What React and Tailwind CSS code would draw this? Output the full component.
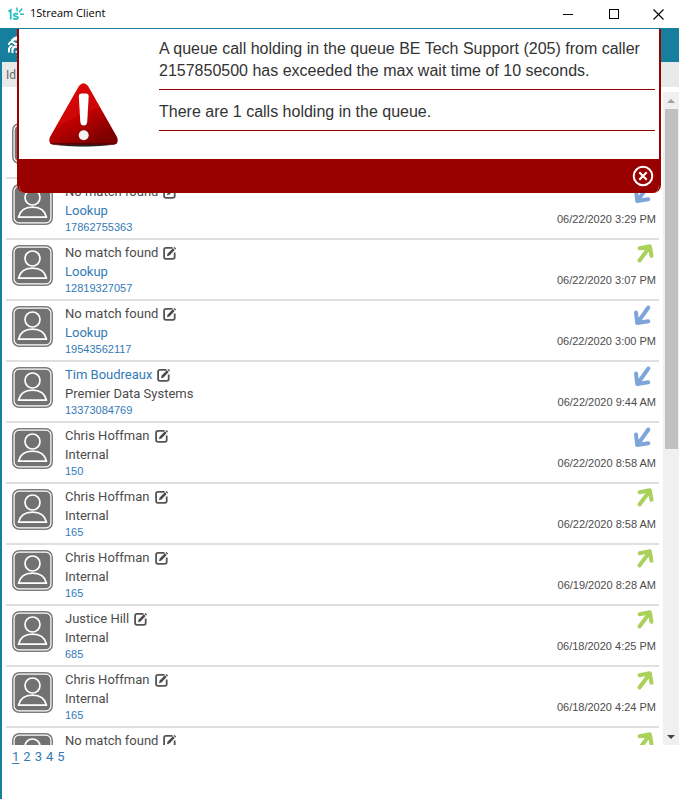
import { useState } from 'react'

const calls = [
  { name: 'No match found', direction: 'out' },
  { name: 'No match found', company: 'Lookup', lookup: true, number: '17862755363', direction: 'in', time: '06/22/2020 3:29 PM' },
  { name: 'No match found', company: 'Lookup', lookup: true, number: '12819327057', direction: 'out', time: '06/22/2020 3:07 PM' },
  { name: 'No match found', company: 'Lookup', lookup: true, number: '19543562117', direction: 'in', time: '06/22/2020 3:00 PM' },
  { name: 'Tim Boudreaux', linked: true, company: 'Premier Data Systems', number: '13373084769', direction: 'in', time: '06/22/2020 9:44 AM' },
  { name: 'Chris Hoffman', company: 'Internal', number: '150', direction: 'in', time: '06/22/2020 8:58 AM' },
  { name: 'Chris Hoffman', company: 'Internal', number: '165', direction: 'out', time: '06/22/2020 8:58 AM' },
  { name: 'Chris Hoffman', company: 'Internal', number: '165', direction: 'out', time: '06/19/2020 8:28 AM' },
  { name: 'Justice Hill', company: 'Internal', number: '685', direction: 'out', time: '06/18/2020 4:25 PM' },
  { name: 'Chris Hoffman', company: 'Internal', number: '165', direction: 'out', time: '06/18/2020 4:24 PM' },
  { name: 'No match found', direction: 'out' },
]

function Avatar() {
  return (
    <svg className="mt-[5px] shrink-0" width="41" height="41" viewBox="0 0 41 41" fill="none">
      <rect x="0.75" y="0.75" width="39.5" height="39.5" rx="6.5" fill="#fff" stroke="#7c7c7c" strokeWidth="1.5" />
      <rect x="2.7" y="2.7" width="35.6" height="35.6" rx="4.5" fill="#727272" />
      <circle cx="20.5" cy="13.5" r="7.5" stroke="#fff" strokeWidth="1.7" />
      <path d="M6.5 33.2C8 27 13 23.2 20.5 23.2S33 27 34.5 33.2Z" stroke="#fff" strokeWidth="1.7" strokeLinejoin="round" />
    </svg>
  )
}

function EditIcon() {
  return (
    <svg width="14" height="14" viewBox="0 0 14 14" fill="none">
      <path d="M9.5 1.9H3Q1.1 1.9 1.1 3.7V11Q1.1 12.8 3 12.8H9.8Q11.7 12.8 11.7 11V6.5" stroke="#555" strokeWidth="1.8" />
      <path d="M3.9 10.2L4.7 7.6L9.9 2.3L11.7 4.1L6.5 9.4Z" fill="#4a4a4a" />
      <path d="M10.5 1.7L11.4 0.9L13.1 2.6L12.3 3.5Z" fill="#4a4a4a" />
    </svg>
  )
}

function DirectionArrow({ direction }) {
  return (
    <svg width="24" height="24" viewBox="0 0 24 24" fill="none" strokeWidth="4" strokeLinecap="round" strokeLinejoin="round">
      {direction === 'in' ? (
        <path d="M16.3 4.5L6.2 18.8M4 9.4L5.2 20L16.3 18.2" stroke="#7da5da" />
      ) : (
        <path d="M7.5 18.5L17.3 5.5M7.7 6.3L17.8 4.2L19.5 13.8" stroke="#a9d15b" />
      )}
    </svg>
  )
}

function CallRow({ call }) {
  return (
    <li className="flex h-[61px] shrink-0 border-b-2 border-[#e0e0e0] pl-1.5">
      <Avatar />
      <div className="min-w-0 flex-1 pl-3 pt-[3px] text-[13px] leading-[19px]">
        <div className="flex items-center gap-[5px]">
          {call.linked ? <a href="#contact" className="text-[#337ab7]">{call.name}</a> : <span>{call.name}</span>}
          <button aria-label={`Edit ${call.name}`} className="pt-px">
            <EditIcon />
          </button>
        </div>
        {call.company && (
          <div>{call.lookup ? <a href="#lookup" className="text-[#337ab7]">{call.company}</a> : call.company}</div>
        )}
        {call.number && (
          <a href="#dial" className="block font-['Liberation_Sans',sans-serif] text-[11px] leading-[14px] text-[#337ab7]">{call.number}</a>
        )}
      </div>
      <div className="flex flex-col items-end pr-[3px] pt-0.5 font-['Liberation_Sans',sans-serif]">
        <DirectionArrow direction={call.direction} />
        {call.time && <time className="mt-[7px] text-[11px] leading-[14px]">{call.time}</time>}
      </div>
    </li>
  )
}

function TitleBar() {
  return (
    <div className="flex h-7 shrink-0 items-center bg-white pl-2 font-['Open_Sans',sans-serif] text-[11px] text-black">
      <svg width="17" height="16" viewBox="0 0 17 16" fill="none" stroke="#25bfc0" strokeWidth="1.8">
        <path d="M0.5 5.5L2.7 4V13.5" />
        <path d="M10 8.2C8.8 7.2 5.8 7.3 5.8 9C5.8 10.9 10 9.8 10 11.7C10 13.3 6.8 13.6 5.2 12.3" />
        <path d="M9.3 5.3L8.8 1.5M11 6.2L14.3 2.6M12 8.2H16" strokeWidth="1.5" />
      </svg>
      <span className="ml-[5px] flex-1 pb-px">1Stream Client</span>
      <button aria-label="Minimize" className="flex w-[46px] justify-center">
        <svg width="11" height="11" viewBox="0 0 11 11" stroke="#000"><path d="M0 5.5H10" /></svg>
      </button>
      <button aria-label="Maximize" className="flex w-[46px] justify-center">
        <svg width="11" height="11" viewBox="0 0 11 11" fill="none" stroke="#000"><rect x="0.5" y="0.5" width="9" height="9" /></svg>
      </button>
      <button aria-label="Close" className="flex w-[42px] justify-center">
        <svg width="11" height="11" viewBox="0 0 11 11" stroke="#000" strokeWidth="1.1"><path d="M0.5 0.5L10.5 10.5M10.5 0.5L0.5 10.5" /></svg>
      </button>
    </div>
  )
}

function WarningIcon() {
  return (
    <svg width="72" height="68" viewBox="0 0 72 68">
      <defs>
        <linearGradient id="warn" x1="0" y1="0" x2="0.6" y2="1">
          <stop offset="0" stopColor="#e00000" />
          <stop offset="0.6" stopColor="#c00000" />
          <stop offset="1" stopColor="#7c0000" />
        </linearGradient>
        <radialGradient id="warnShadow">
          <stop offset="0.7" stopColor="#222" />
          <stop offset="1" stopColor="#222" stopOpacity="0" />
        </radialGradient>
        <clipPath id="warnShape">
          <path d="M31 4Q35.5 -1.5 40 4L69 55Q71.5 62 65 62.5H6Q-0.5 62 2 55Z" />
        </clipPath>
      </defs>
      <ellipse cx="35.5" cy="62" rx="33" ry="3" fill="url(#warnShadow)" />
      <g clipPath="url(#warnShape)">
        <rect width="72" height="63" fill="url(#warn)" />
        <path d="M0 0H60L56 25Q38 27 24 37Q14 43 0 46Z" fill="#ff2020" opacity="0.2" />
        <path d="M0 61H72V63H0Z" fill="#5b0000" />
      </g>
      <path d="M30.8 14Q30.8 11.5 33.2 11.5H38.3Q40.7 11.5 40.7 14L39.2 40Q38.7 43.5 35.7 43.5T32.3 40Z" fill="#fff" />
      <circle cx="35.7" cy="53.3" r="5" fill="#f3f3f3" />
    </svg>
  )
}

function QueueAlert({ onClose }) {
  return (
    <div role="alertdialog" aria-label="Queue alert" className="absolute left-[15px] right-[18px] top-px overflow-hidden rounded-b-lg border-x-2 border-[#990000] bg-white text-[#333]">
      <div className="flex h-[130px] pt-[9px] font-['Liberation_Sans',sans-serif] text-base leading-[22px]">
        <div className="w-[140px] shrink-0 pl-[29px] pt-11">
          <WarningIcon />
        </div>
        <div className="mr-1 flex-1">
          <p className="border-b border-[#990000] pb-[7px]">
            A queue call holding in the queue BE Tech Support (205) from caller 2157850500 has exceeded the max wait time of 10 seconds.
          </p>
          <p className="border-b border-[#990000] pb-[7px] pt-[11px]">There are 1 calls holding in the queue.</p>
        </div>
      </div>
      <div className="flex h-[34px] items-center justify-end bg-[#990000] pr-[5px]">
        <button aria-label="Dismiss alert" onClick={onClose}>
          <svg width="22" height="22" viewBox="0 0 22 22" fill="none" stroke="#fff" strokeWidth="2">
            <circle cx="11" cy="11" r="9.3" />
            <path d="M7.3 7.3L14.7 14.7M14.7 7.3L7.3 14.7" strokeWidth="2.2" />
          </svg>
        </button>
      </div>
    </div>
  )
}

function Scrollbar() {
  return (
    <div className="mt-[5px] flex w-4 flex-col bg-[#f0f0f0]">
      <button aria-label="Scroll up" className="flex h-[17px] items-center justify-center">
        <svg width="8" height="4" viewBox="0 0 8 4" fill="#a0a0a0"><path d="M0 4L4 0L8 4Z" /></svg>
      </button>
      <div className="flex-1 pl-0.5 pr-px">
        <div className="h-[55%] bg-[#c1c1c1]" />
      </div>
      <button aria-label="Scroll down" className="flex h-[17px] items-center justify-center">
        <svg width="8" height="4" viewBox="0 0 8 4" fill="#444"><path d="M0 0L4 4L8 0Z" /></svg>
      </button>
    </div>
  )
}

export default function App() {
  const [alertOpen, setAlertOpen] = useState(true)
  const [page, setPage] = useState(1)

  return (
    <div className="flex h-screen flex-col overflow-hidden bg-white font-[Roboto,sans-serif] text-[#4c4c4c]">
      <TitleBar />

      <div className="relative flex min-h-0 flex-1 flex-col border-l-2 border-[#177f9e]">
        {/* Header */}
        <header className="flex h-[34px] shrink-0 items-center bg-[#177f9e] pl-1.5">
          <svg width="20" height="18" viewBox="0 0 20 18" fill="#fff" stroke="#fff">
            <path d="M3 6Q3.5 1 11 0.5V4Q6 3 3 6Z" />
            <path d="M0.5 9Q2 4.5 5.5 6.5Q8 9.5 12 7.5" fill="none" strokeWidth="2" />
            <path d="M1.2 16.5Q-0.3 11 4.5 9.5M4.8 17Q3.2 12.5 7 10.5L11 11" fill="none" strokeWidth="2" />
            <path d="M7.5 15.8H12" fill="none" strokeWidth="1.8" />
          </svg>
        </header>
        <div className="flex h-[25px] shrink-0 items-center bg-[#e8eaea] pl-1 text-xs text-[#666]">Id</div>

        {/* Call history */}
        <div className="flex min-h-0 flex-1">
          <ul className="mr-1 flex flex-1 flex-col overflow-hidden pl-1 pt-[31px]">
            {calls.map((call, i) => (
              <CallRow key={i} call={call} />
            ))}
          </ul>
          <Scrollbar />
        </div>

        <nav aria-label="Pages" className="flex h-[54px] shrink-0 items-start gap-1 pl-2.5 pt-0.5 text-[13px] leading-[19px] text-[#337ab7]">
          {[1, 2, 3, 4, 5].map((n) => (
            <button key={n} onClick={() => setPage(n)} className={n === page ? 'underline underline-offset-2' : ''}>
              {n}
            </button>
          ))}
        </nav>

        {alertOpen && <QueueAlert onClose={() => setAlertOpen(false)} />}
      </div>
    </div>
  )
}
